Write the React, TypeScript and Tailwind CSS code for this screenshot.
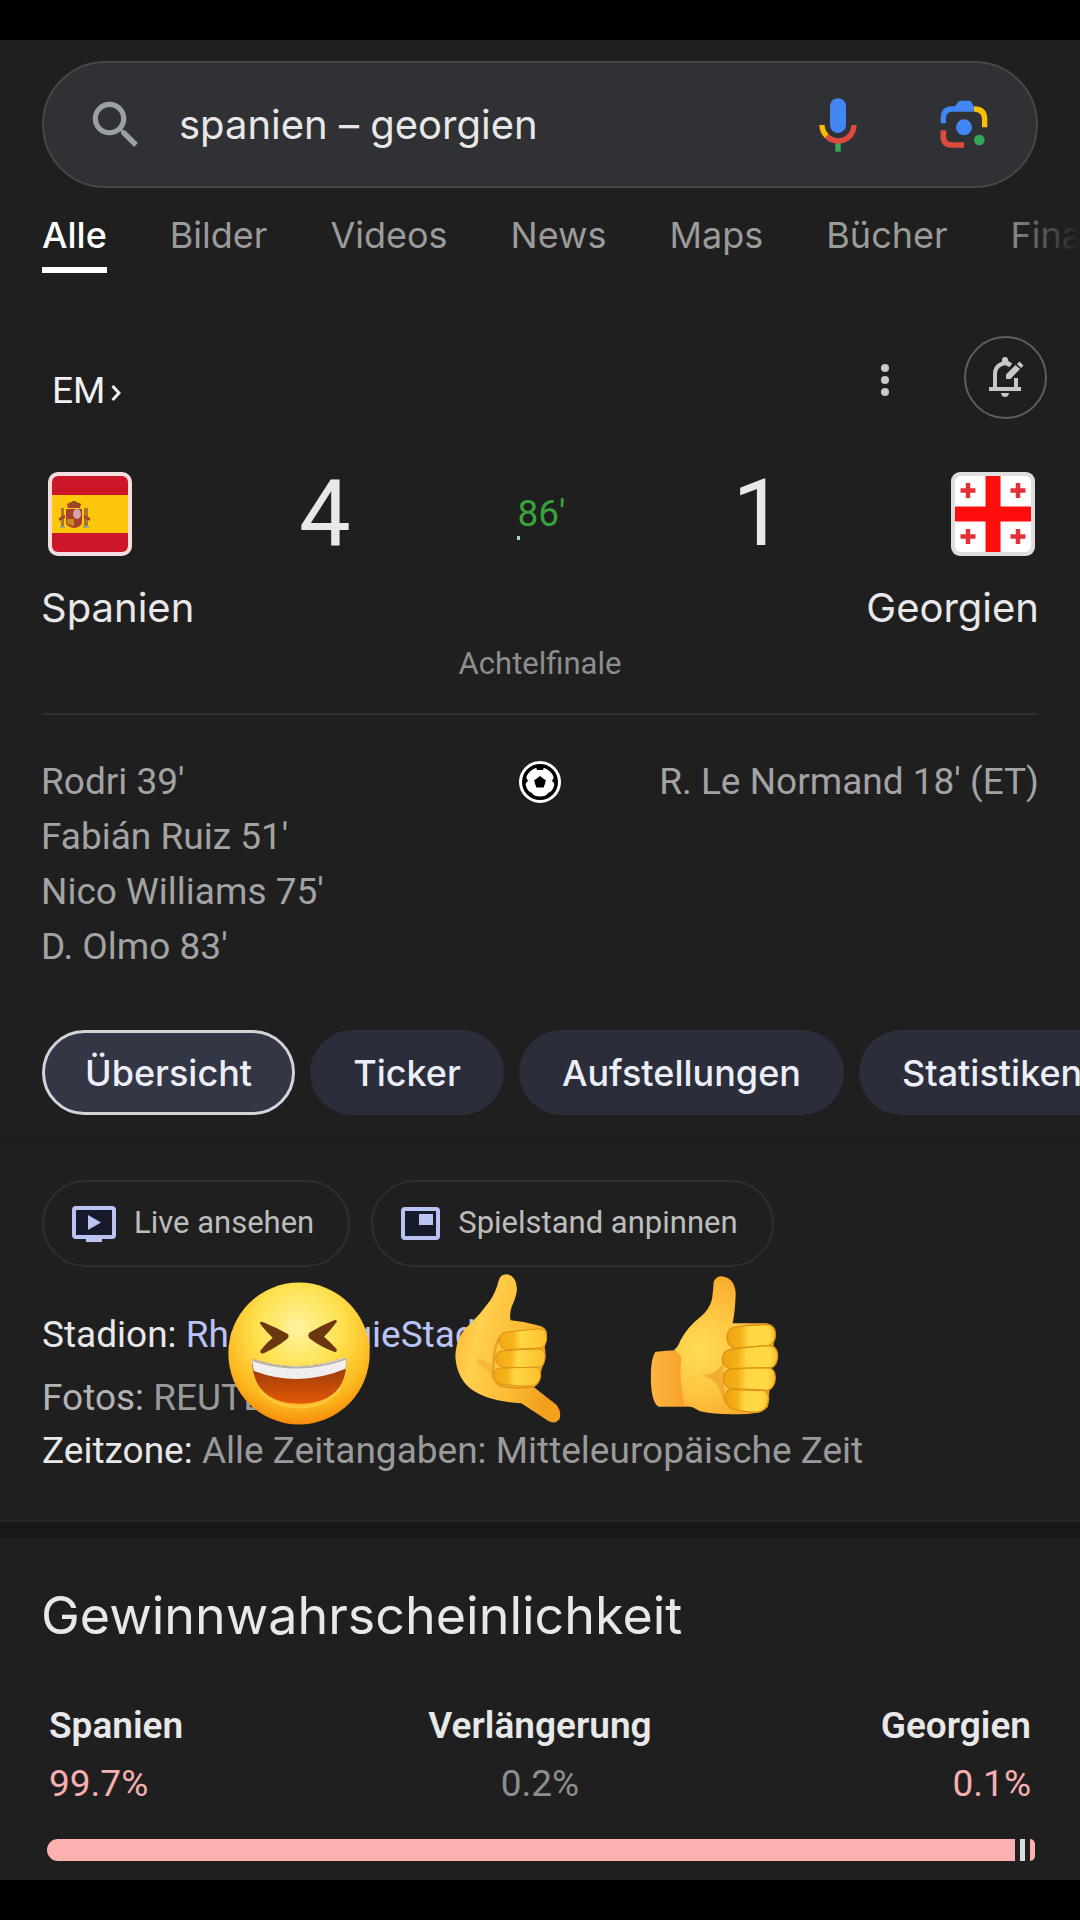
import React from "react";

const tabs = ["Alle", "Bilder", "Videos", "News", "Maps", "Bücher", "Finanzen"];
const homeGoals = ["Rodri 39'", "Fabián Ruiz 51'", "Nico Williams 75'", "D. Olmo 83'"];
const chips = ["Übersicht", "Ticker", "Aufstellungen", "Statistiken"];

function SearchIcon() {
  return (
    <svg viewBox="0 0 24 24" className="size-[62px] shrink-0" fill="#9aa0a3" aria-hidden="true">
      <path d="M15.5 14h-.79l-.28-.27A6.471 6.471 0 0 0 16 9.5 6.5 6.5 0 1 0 9.5 16c1.61 0 3.09-.59 4.23-1.57l.27.28v.79l5 4.99L20.49 19l-4.99-5zm-6 0C7.01 14 5 11.99 5 9.5S7.01 5 9.5 5 14 7.01 14 9.5 11.99 14 9.5 14z" />
    </svg>
  );
}

function MicIcon() {
  return (
    <svg viewBox="0 0 24 24" className="size-16" aria-hidden="true">
      <path fill="#4285f4" d="m12 15c1.66 0 3-1.31 3-2.97v-7.02c0-1.66-1.34-3.01-3-3.01s-3 1.34-3 3.01v7.02c0 1.66 1.34 2.97 3 2.97z" />
      <path fill="#34a853" d="m11 18.08h2v3.92h-2z" />
      <path fill="#fbbc05" d="m7.05 16.87c-1.27-1.33-2.05-2.83-2.05-4.87h2c0 1.45 0.56 2.42 1.47 3.38v0.32l-1.15 1.18z" />
      <path fill="#dd4b3e" d="m12 16.93a4.97 5.25 0 0 1-3.54-1.55l-1.41 1.49c1.26 1.34 3.02 2.13 4.95 2.13 3.87 0 6.99-2.92 6.99-7h-1.99c0 2.92-2.24 4.93-5 4.93z" />
    </svg>
  );
}

function LensIcon() {
  return (
    <svg viewBox="480 120 144 147" className="h-[49px] w-12" aria-hidden="true">
      <path d="M490 190V176Q490 147 516 147H580" fill="none" stroke="#4285f4" strokeWidth="16" />
      <path d="M520 146L534 126Q537 122 542 122H566Q571 122 574 126L588 152H520Z" fill="#4285f4" />
      <path d="M582 147Q614 147 614 178V202" fill="none" stroke="#fbbc05" strokeWidth="16" />
      <path d="M490 211V230Q490 255 518 255H552" fill="none" stroke="#dd4b3e" strokeWidth="17" />
      <circle cx="552" cy="202" r="24" fill="#4285f4" />
      <circle cx="598" cy="240" r="16" fill="#34a853" />
    </svg>
  );
}

function BellEditIcon() {
  return (
    <svg viewBox="0 0 36 42" className="h-[42px] w-9" aria-hidden="true">
      <g fill="none" stroke="#c6c8ca" strokeWidth="4">
        <path d="M1 33H33" />
        <path d="M7 33V18Q7 9 17 7Q20 7 23 9" />
        <path d="M28 33V22" />
      </g>
      <circle cx="17" cy="4" r="3" fill="#c6c8ca" />
      <path d="M13.500 7L15 3H19L23.500 8.500L21 11Z" fill="#c6c8ca" />
      <path d="M13 37H21Q20.500 41 17 41Q13.500 41 13 37Z" fill="#c6c8ca" />
      <path d="M18 23V18.500L27.500 9L32 13L22.500 23Z" fill="#c6c8ca" />
      <path d="M29 8L31.500 5.500L35.500 9.500L33 12Z" fill="#c6c8ca" />
    </svg>
  );
}

function SpainFlag() {
  return (
    <svg viewBox="0 0 84 84" className="size-[84px]" role="img" aria-label="Flagge Spanien">
      <rect width="84" height="84" rx="10" fill="#f3dedf" />
      <clipPath id="es">
        <rect x="4" y="4" width="76" height="76" rx="6" />
      </clipPath>
      <g clipPath="url(#es)">
        <rect width="84" height="84" fill="#cd1628" />
        <rect y="23" width="84" height="38" fill="#fec70b" />
      </g>
      <g fill="#a4402c">
        <path d="M19 32Q26 27 33 32L32 36H20Z" />
        <path d="M18 37H34V50Q34 55 26 56Q18 55 18 50Z" />
        <path d="M13 36H16V56H13ZM36 36H40V56H36Z" fill="#a8762c" />
        <path d="M11 46L17 43V46L11 49ZM42 46L36 43V46L42 49Z" />
      </g>
      <path d="M24 29h4v4h-4z" fill="#7d5a1c" />
      <path d="M19 47H26V54Q20 53 19 50Z" fill="#c98a1c" />
      <ellipse cx="29" cy="42" rx="4" ry="5" fill="#d6a3a8" />
      <path d="M12 54H17V56H12ZM35 54H41V56H35Z" fill="#9aa58a" />
    </svg>
  );
}

function GeorgiaFlag() {
  return (
    <svg viewBox="0 0 84 84" className="size-[84px]" role="img" aria-label="Flagge Georgien">
      <rect width="84" height="84" rx="9" fill="#dedede" />
      <rect x="4" y="4" width="76" height="76" rx="6" fill="#fff" />
      <path d="M34.500 4H49.500V34.500H80V49.500H49.500V80H34.500V49.500H4V34.500H34.500Z" fill="#fe0d0d" />
      <g stroke="#e23237" strokeWidth="4.500">
        <path d="M17 11V26M9.500 18.500H24.500" />
        <path d="M67 11V26M59.500 18.500H74.500" />
        <path d="M17 57V72M9.500 64.500H24.500" />
        <path d="M67 57V72M59.500 64.500H74.500" />
      </g>
    </svg>
  );
}

function BallIcon() {
  return (
    <svg viewBox="0 0 44 44" className="size-11" role="img" aria-label="Tore">
      <circle cx="22" cy="22" r="19.500" fill="#000" stroke="#fff" strokeWidth="3" />
      <circle cx="22" cy="22" r="14.500" fill="#fff" />
      <path d="M22 16L28 20.500L25.700 27.500H18.300L16 20.500Z" fill="#000" />
      <path d="M18 7H26L25 10H19ZM36 17L38 25L34 21ZM8 17L6 25L10 21ZM27 37L34 31L30 33ZM17 37L10 31L14 33Z" fill="#000" />
    </svg>
  );
}

function LiveIcon() {
  return (
    <svg viewBox="0 0 44 36" className="h-9 w-11" aria-hidden="true">
      <rect x="2" y="2" width="40" height="29" rx="2" fill="#161a2b" stroke="#b9c4f3" strokeWidth="4" />
      <path d="M14 31H30V36H14Z" fill="#b9c4f3" />
      <path d="M16 9L29 16.500L16 24Z" fill="#b9c4f3" />
    </svg>
  );
}

function PinIcon() {
  return (
    <svg viewBox="0 0 39 33" className="h-[33px] w-[39px]" aria-hidden="true">
      <rect x="2" y="2" width="35" height="29" rx="2" fill="#161a2b" stroke="#b9c4f3" strokeWidth="4" />
      <rect x="18" y="7" width="14" height="11" fill="#b9c4f3" />
    </svg>
  );
}

function LaughEmoji() {
  return (
    <svg viewBox="54 66 426 428" className="h-[143px] w-[142px]" role="img" aria-label="Lachendes Gesicht">
      <defs>
        <radialGradient id="face" cx="0.5" cy="0.32" r="0.7">
          <stop offset="0" stopColor="#fff3a0" />
          <stop offset="0.45" stopColor="#fee04c" />
          <stop offset="0.78" stopColor="#fcb81f" />
          <stop offset="1" stopColor="#f58608" />
        </radialGradient>
        <linearGradient id="mouth" x1="0" y1="0" x2="0" y2="1">
          <stop offset="0.3" stopColor="#a33e09" />
          <stop offset="1" stopColor="#e45a08" />
        </linearGradient>
      </defs>
      <ellipse cx="267" cy="280" rx="212" ry="213" fill="url(#face)" />
      <path d="M149 189Q152 182 160 186Q200 202 232 221Q240 227 232 236Q200 262 160 280Q150 282 151 272Q168 250 188 233Q168 214 149 189Z" fill="#6b3710" />
      <path d="M381 184Q378 177 370 181Q330 198 299 217Q291 226 299 235Q335 262 372 275Q384 277 379 266Q360 245 342 230Q362 210 381 184Z" fill="#6b3710" />
      <path d="M126 302Q128 296 134 298Q266 340 400 293Q408 291 409 300Q410 428 268 431Q130 428 126 302Z" fill="url(#mouth)" />
      <path d="M126 302Q128 296 134 298Q266 340 400 293Q408 291 409 300L407 326Q268 384 131 332Z" fill="#f1efee" />
      <path d="M128 300Q266 346 407 296" fill="none" stroke="#8f8a76" strokeWidth="6" opacity="0.6" />
      <path d="M148 388Q190 440 268 441Q350 440 392 384" fill="none" stroke="#ffd24d" strokeWidth="8" opacity="0.6" />
    </svg>
  );
}

function ShakaEmoji() {
  return (
    <svg viewBox="36 36 330 459" className="h-[153px] w-[110px]" role="img" aria-label="Ruf-mich-an-Hand">
      <defs>
        <linearGradient id="shaka" x1="0" y1="0" x2="1" y2="0.3">
          <stop offset="0" stopColor="#f9b02c" />
          <stop offset="0.3" stopColor="#ffd04e" />
          <stop offset="0.7" stopColor="#fdbb33" />
          <stop offset="1" stopColor="#f3a01f" />
        </linearGradient>
        <linearGradient id="finger" x1="0" y1="0" x2="1" y2="0">
          <stop offset="0" stopColor="#f3a911" />
          <stop offset="0.3" stopColor="#f7b51c" />
          <stop offset="0.45" stopColor="#ffd745" />
          <stop offset="1" stopColor="#fcc02d" />
        </linearGradient>
      </defs>
      <path d="M176 62Q182 43 199 43Q228 46 231 86Q230 108 215 140Q207 164 212 181Q250 184 290 195Q320 200 321 222Q321 245 314 262Q320 288 312 312Q304 322 302 345Q303 368 282 382L350 435Q366 456 358 478Q346 494 325 483L244 430Q140 424 90 385Q50 350 46 290Q48 230 84 198Q120 164 150 122Q168 95 176 62Z" fill="url(#shaka)" />
      <path d="M178 232Q160 270 162 300Q152 360 178 376Q220 388 282 380" fill="none" stroke="#dc8917" strokeWidth="7" opacity="0.65" />
      <path d="M120 306Q160 322 162 350" fill="none" stroke="#eda02c" strokeWidth="20" opacity="0.4" strokeLinecap="round" />
      <g fill="url(#finger)" stroke="#dd9214" strokeWidth="3">
        <path d="M196 217Q250 210 300 206Q321 210 320 232Q320 258 302 264Q250 266 200 269Q178 264 178 240Q180 219 196 217Z" />
        <path d="M184 273Q240 268 300 267Q316 272 315 292Q314 316 298 321Q250 325 190 322Q168 316 167 296Q168 276 184 273Z" />
        <path d="M178 325Q230 322 290 322Q303 328 302 348Q298 374 276 378Q230 380 182 372Q163 364 161 346Q162 328 178 325Z" />
      </g>
    </svg>
  );
}

function ThumbEmoji() {
  return (
    <svg viewBox="624 42 396 426" className="h-[142px] w-[132px]" role="img" aria-label="Daumen hoch">
      <defs>
        <linearGradient id="wrist" x1="0" y1="0" x2="1" y2="0">
          <stop offset="0" stopColor="#fdb640" />
          <stop offset="1" stopColor="#f59a28" />
        </linearGradient>
        <radialGradient id="palm" gradientUnits="userSpaceOnUse" cx="780" cy="270" r="230">
          <stop offset="0" stopColor="#ffdc55" />
          <stop offset="0.5" stopColor="#fec844" />
          <stop offset="1" stopColor="#f9ac2c" />
        </radialGradient>
        <linearGradient id="knuckle" x1="0" y1="0" x2="1" y2="0">
          <stop offset="0" stopColor="#f0a40e" />
          <stop offset="0.28" stopColor="#f5b018" />
          <stop offset="0.45" stopColor="#ffd744" />
          <stop offset="0.85" stopColor="#ffd944" />
          <stop offset="1" stopColor="#f8bb2b" />
        </linearGradient>
      </defs>
      <path d="M646 276Q680 270 760 270V440L656 440Q636 430 633 370Q630 300 646 276Z" fill="url(#wrist)" />
      <path d="M702 270Q714 262 722 240Q744 200 780 172Q808 150 816 118Q820 90 821 66Q828 48 846 49Q884 54 887 100Q886 150 878 190L980 190Q1000 194 1004 218L984 440Q965 460 920 462Q830 466 780 454Q755 438 734 436Q716 350 724 300Q722 278 702 270Z" fill="url(#palm)" />
      <path d="M780 346Q830 346 850 305V340Q850 420 880 448Q850 440 840 390Q820 350 780 346Z" fill="#e8901c" opacity="0.5" />
      <g fill="url(#knuckle)" stroke="#dd9214" strokeWidth="4">
        <path d="M880 203Q940 192 988 195Q1006 200 1006 224Q1006 248 988 256L886 266Q862 258 861 234Q862 206 880 203Z" />
        <path d="M866 270Q930 258 994 257Q1013 264 1013 288Q1012 316 994 323L872 326Q848 320 847 298Q849 274 866 270Z" />
        <path d="M868 328Q930 323 990 324Q1006 330 1006 354Q1004 384 984 391L874 386Q851 378 850 356Q851 332 868 328Z" />
        <path d="M872 388Q930 391 974 391Q987 398 986 418Q982 450 956 456Q910 458 876 446Q856 434 855 412Q857 392 872 388Z" />
      </g>
    </svg>
  );
}

export default function App() {
  return (
    <div className="min-h-screen overflow-hidden bg-black py-10 font-[Roboto,sans-serif] text-[#e8e8e8]">
      <main className="bg-[#1f1f1f]">
        <header className="pt-[21px] font-[Inter,sans-serif]">
          <form className="mx-[42px] flex h-[127px] items-center rounded-full border-2 border-[#444648] bg-[#303134] pr-12 pl-[41px]">
            <SearchIcon />
            <input
              type="text"
              aria-label="Suche"
              defaultValue="spanien – georgien"
              className="ml-8 min-w-0 flex-1 bg-transparent text-[40px] text-[#e8e8e8] outline-none"
            />
            <button type="button" aria-label="Sprachsuche" className="mr-[70px]">
              <MicIcon />
            </button>
            <button type="button" aria-label="Google Lens">
              <LensIcon />
            </button>
          </form>
          <nav className="relative mt-[25px] flex gap-[63px] overflow-hidden pl-[42px] text-[36px] leading-[44px]">
            {tabs.map((tab, i) => (
              <a
                key={tab}
                href="#"
                className={
                  i === 0
                    ? "shrink-0 border-b-6 border-white pb-[10px] font-medium text-white"
                    : "shrink-0 pb-4 text-[#9b9b9b]"
                }
              >
                {tab}
              </a>
            ))}
            <div className="pointer-events-none absolute inset-y-0 right-0 w-20 bg-linear-to-l from-[#1f1f1f] to-transparent" />
          </nav>
        </header>

        <section>
          <div className="mt-[62px] flex h-[84px] items-center pr-[33px] pl-[52px]">
            <a href="#" className="flex items-center gap-[6px] self-end pb-[6px] text-[37px] leading-[44px] text-[#f1f1f3]">
              EM
              <svg viewBox="0 0 10 16" className="mt-1 h-4 w-[10px]" fill="none" stroke="currentColor" strokeWidth="3" aria-hidden="true">
                <path d="M1.500 1L8 8L1.500 15" />
              </svg>
            </a>
            <button type="button" aria-label="Mehr Optionen" className="mr-[67px] ml-auto">
              <svg viewBox="0 0 24 40" className="h-10 w-6" fill="#c8cacc" aria-hidden="true">
                <circle cx="12" cy="11" r="4" />
                <circle cx="12" cy="23" r="4" />
                <circle cx="12" cy="35" r="4" />
              </svg>
            </button>
            <button type="button" aria-label="Benachrichtigungen" className="flex size-[83px] items-center justify-center rounded-full border-2 border-[#5f5f5f]">
              <BellEditIcon />
            </button>
          </div>

          <div className="mt-[53px] flex items-center justify-between pr-[45px] pl-12">
            <SpainFlag />
            <span className="text-[92px] leading-[84px]">4</span>
            <span className="relative text-[37px] leading-[84px] text-[#38a33b]">
              86'
              <span className="absolute bottom-4 left-0 h-1 w-[3px] bg-[#a5d6d0]" />
            </span>
            <span className="text-[92px] leading-[84px]">1</span>
            <GeorgiaFlag />
          </div>
          <div className="mt-[27px] flex justify-between px-[41px] font-[Inter,sans-serif] text-[40px] leading-[50px]">
            <span>Spanien</span>
            <span>Georgien</span>
          </div>
          <p className="mt-[13px] text-center text-[31px] leading-9 text-[#8e8e8e]">Achtelfinale</p>
          <div className="mx-[42px] mt-[31px] h-[2px] bg-[#2f2f2f]" />

          <div className="mt-[39px] grid grid-cols-[1fr_auto_1fr] px-[41px] text-[37px] leading-[55px] text-[#a3a3a3]">
            <ul>
              {homeGoals.map((goal) => (
                <li key={goal}>{goal}</li>
              ))}
            </ul>
            <div className="pt-[6px]">
              <BallIcon />
            </div>
            <p className="text-right">R. Le Normand 18' (ET)</p>
          </div>
        </section>

        <div className="mt-14 flex gap-[15px] overflow-hidden pl-[42px] font-[Inter,sans-serif]">
          {chips.map((chip, i) => (
            <button
              key={chip}
              type="button"
              className={
                i === 0
                  ? "h-[85px] shrink-0 rounded-full border-3 border-[#d3d4da] bg-[#333644] px-10 text-[36px] font-medium text-[#eceef8]"
                  : "h-[85px] shrink-0 rounded-full bg-[#2b2e3a] px-[43px] text-[36px] font-medium text-[#eceef8]"
              }
            >
              {chip}
            </button>
          ))}
        </div>
        <div className="mt-[22px] h-px bg-[#191919]" />

        <section className="relative pt-[42px]">
          <div className="flex gap-[21px] px-[42px] text-[31px] text-[#bdbdbd]">
            <button type="button" className="flex h-[87px] items-center gap-[18px] rounded-full border-2 border-[#2e2e2e] pr-[34px] pl-7">
              <LiveIcon />
              Live ansehen
            </button>
            <button type="button" className="flex h-[87px] items-center gap-[18px] rounded-full border-2 border-[#2e2e2e] pr-[34px] pl-7">
              <PinIcon />
              Spielstand anpinnen
            </button>
          </div>
          <div className="px-[42px] pt-[46px] text-[37px] leading-[44px] text-[#9a9a9a]">
            <p>
              <span className="text-[#e8e8e8]">Stadion: </span>
              <a href="#" className="text-[#bac3f5]">RheinEnergieStadion</a>
            </p>
            <p className="mt-[19px]">
              <span className="text-[#b4b4b4]">Fotos: </span>REUTERS
            </p>
            <p className="mt-[9px]">
              <span className="text-[#e8e8e8]">Zeitzone: </span>Alle Zeitangaben: Mitteleuropäische Zeit
            </p>
          </div>
          <div className="pointer-events-none absolute top-[134px] left-[228px] flex">
            <div className="pt-[10px]">
              <LaughEmoji />
            </div>
            <div className="ml-[82px]">
              <ShakaEmoji />
            </div>
            <div className="ml-[86px] pt-[2px]">
              <ThumbEmoji />
            </div>
          </div>
        </section>

        <div className="mt-[47px] h-[18px] border-t-2 border-[#242525] bg-[#171817]" />

        <section className="pt-12 pb-[19px]">
          <h2 className="px-[41px] font-[Inter,sans-serif] text-[52px] leading-[60px]">Gewinnwahrscheinlichkeit</h2>
          <div className="px-[49px] pt-[58px]">
            <table className="w-full table-fixed text-[37px] leading-[44px]">
              <thead>
                <tr>
                  <th scope="col" className="p-0 text-left font-semibold">Spanien</th>
                  <th scope="col" className="p-0 text-center font-semibold">Verlängerung</th>
                  <th scope="col" className="p-0 text-right font-semibold">Georgien</th>
                </tr>
              </thead>
              <tbody>
                <tr>
                  <td className="p-0 pt-[14px] text-left text-[#f6b0b0]">99.7%</td>
                  <td className="p-0 pt-[14px] text-center text-[#8e8e8e]">0.2%</td>
                  <td className="p-0 pt-[14px] text-right text-[#f6b0b0]">0.1%</td>
                </tr>
              </tbody>
            </table>
          </div>
          <div className="mt-[33px] flex h-[22px] gap-[5px] pr-[45px] pl-[47px]">
            <div className="flex-1 rounded-l-full bg-[#fdb1af]" />
            <div className="w-[5px] bg-[#d8dcdb]" />
            <div className="w-[5px] rounded-r-full bg-[#fdb1af]" />
          </div>
        </section>
      </main>
    </div>
  );
}
